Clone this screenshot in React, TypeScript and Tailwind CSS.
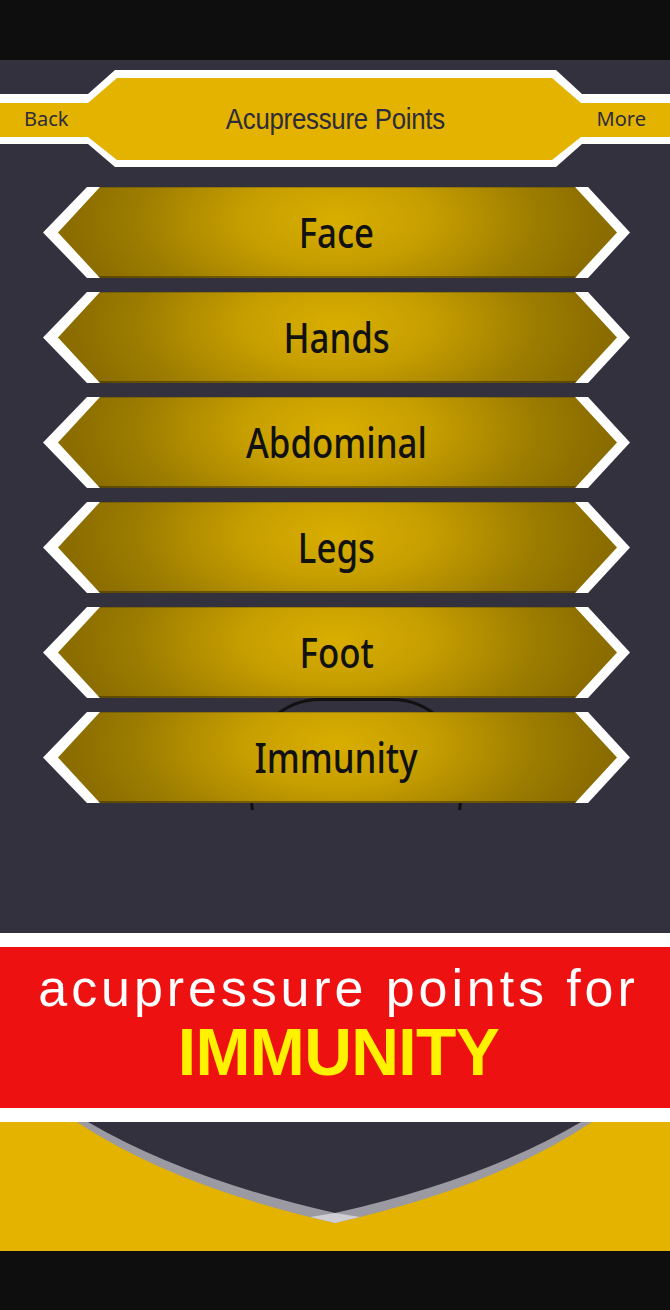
import React from 'react';

// Menu entries, top to bottom
const sections = ['Face', 'Hands', 'Abdominal', 'Legs', 'Foot', 'Immunity'];

const MenuButton: React.FC<{ label: string }> = ({ label }) => (
  <button className="relative z-10 grid h-[91px] w-[587px] cursor-pointer">
    {/* white chevron edges */}
    <div className="relative col-start-1 row-start-1 bg-white [clip-path:polygon(44px_0,545px_0,587px_45.5px,545px_91px,44px_91px,0_45.5px)]" />
    {/* gold body */}
    <div className="relative col-start-1 row-start-1 bg-[radial-gradient(ellipse_46%_140%_at_50%_35%,#d9ae00_0%,#c69e00_35%,#9c7c00_75%,#8a6c00_100%)] shadow-[inset_0_-2px_0_rgba(40,30,0,0.45),inset_0_1px_0_rgba(40,30,0,0.25)] [clip-path:polygon(57px_0,532px_0,574px_45.5px,532px_91px,57px_91px,15px_45.5px)]" />
    <div className="relative col-start-1 row-start-1 flex items-center justify-center">
      <span className="scale-x-[0.85] font-['Noto_Sans','Open_Sans',sans-serif] text-[41px] font-medium leading-none text-[#111]">
        {label}
      </span>
    </div>
  </button>
);

const Header: React.FC = () => (
  <div className="mt-[10px] grid h-[97px] w-full">
    <div className="relative col-start-1 row-start-1 mt-[24px] h-[50px] bg-white" />
    <div className="relative col-start-1 row-start-1 bg-white [clip-path:polygon(88px_24px,115px_0,556px_0,582px_24px,582px_74px,556px_97px,115px_97px,88px_74px)]" />
    <div className="relative col-start-1 row-start-1 mt-[33px] h-[34px] bg-[#e3b300]" />
    <div className="relative col-start-1 row-start-1 bg-[#e3b300] [clip-path:polygon(88px_33px,117px_8px,552px_8px,581px_33px,581px_67px,552px_90px,117px_90px,88px_67px)]" />
    <div className="relative col-start-1 row-start-1 flex items-center justify-between px-[24px] text-[#2e2c3b]">
      <span className="w-[60px] font-['Noto_Sans','Open_Sans',sans-serif] text-[20px]">Back</span>
      <span className="scale-x-[0.86] font-['Liberation_Sans',Arial,sans-serif] text-[30px] tracking-[-0.3px]">
        Acupressure Points
      </span>
      <span className="w-[60px] text-right font-['Noto_Sans','Open_Sans',sans-serif] text-[20px]">More</span>
    </div>
  </div>
);

export default function App() {
  return (
    <div className="flex h-[1310px] w-[670px] flex-col overflow-hidden bg-[#0e0e0f]">
      <div className="h-[60px] shrink-0 bg-[#0e0e0f]" />

      <div className="flex h-[873px] shrink-0 flex-col bg-[#33313e]">
        <Header />

        {/* section buttons */}
        <div className="relative mt-[20px] flex flex-col gap-[14px] overflow-hidden pb-[7px] pl-[43px]">
          <div className="absolute left-[250px] top-[511px] h-[170px] w-[212px] rounded-[70px] border-[3px] border-[#111]" />
          {sections.map((s) => (
            <MenuButton key={s} label={s} />
          ))}
        </div>
      </div>

      {/* banner */}
      <div className="h-[14px] shrink-0 bg-white" />
      <div className="flex h-[161px] shrink-0 flex-col items-center bg-[#ee1111] pl-[7px] pt-[11px] font-['Liberation_Sans',Arial,sans-serif]">
        <div className="text-[52px] leading-[60px] tracking-[3.9px] text-white">acupressure points for</div>
        <div className="-mt-px text-[66px] font-bold leading-[70px] tracking-[-0.6px] text-[#fff200]">IMMUNITY</div>
      </div>
      <div className="h-[14px] shrink-0 bg-white" />

      <div className="h-[129px] shrink-0 bg-[#e3b300]">
        <svg width="670" height="129" viewBox="0 0 670 129">
          <path d="M77 0 Q175 65 335 101 Q495 65 592 0 Z" fill="#9b99a1" />
          <path d="M310 95 L335 101 L360 95 L335 91 Z" fill="#cfcfd3" />
          <path d="M88 0 Q185 57 335 91 Q485 57 581 0 Z" fill="#33313e" />
        </svg>
      </div>

      <div className="flex-1 bg-[#0e0e0f]" />
    </div>
  );
}
